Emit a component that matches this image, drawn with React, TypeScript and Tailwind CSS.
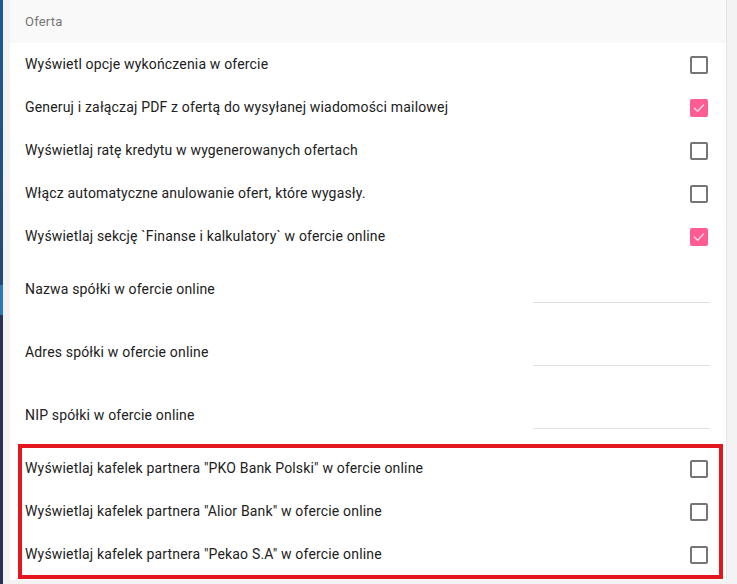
import React from "react";

type CheckRow = { label: string; checked: boolean };

const topRows: CheckRow[] = [
  { label: "Wyświetl opcje wykończenia w ofercie", checked: false },
  { label: "Generuj i załączaj PDF z ofertą do wysyłanej wiadomości mailowej", checked: true },
  { label: "Wyświetlaj ratę kredytu w wygenerowanych ofertach", checked: false },
  { label: "Włącz automatyczne anulowanie ofert, które wygasły.", checked: false },
  { label: "Wyświetlaj sekcję `Finanse i kalkulatory` w ofercie online", checked: true },
];

const inputRows = [
  "Nazwa spółki w ofercie online",
  "Adres spółki w ofercie online",
  "NIP spółki w ofercie online",
];

const partnerRows: CheckRow[] = [
  { label: 'Wyświetlaj kafelek partnera "PKO Bank Polski" w ofercie online', checked: false },
  { label: 'Wyświetlaj kafelek partnera "Alior Bank" w ofercie online', checked: false },
  { label: 'Wyświetlaj kafelek partnera "Pekao S.A" w ofercie online', checked: false },
];

function Checkbox({ checked }: { checked: boolean }) {
  if (checked) {
    return (
      <div className="w-[18px] h-[18px] rounded-[2px] bg-[#ff5c93] flex items-center justify-center">
        <svg width="14" height="14" viewBox="0 0 14 14" fill="none">
          <path d="M2.5 7.2 L5.6 10.2 L11.5 4" stroke="#ffd0e0" strokeWidth="1.6" strokeLinecap="round" strokeLinejoin="round" />
        </svg>
      </div>
    );
  }
  return <div className="w-[18px] h-[18px] rounded-[2px] border-2 border-[#757575] bg-white" />;
}

function Row({ row }: { row: CheckRow }) {
  return (
    <div className="h-[43px] flex items-center justify-between pl-[15px] pr-[18px]">
      <span className="text-[14px] tracking-[0.17px] text-[#212121]">{row.label}</span>
      <Checkbox checked={row.checked} />
    </div>
  );
}

export default function App() {
  return (
    <div
      className="w-[737px] h-[584px] bg-[#f3f3f3] flex overflow-hidden"
      style={{ fontFamily: "Roboto, 'Liberation Sans', sans-serif" }}
    >
      {/* sidebar edge */}
      <div className="w-[3px] h-full flex flex-col">
        <div className="h-[285px] bg-gradient-to-b from-[#1a5c96] to-[#24487a]" />
        <div className="h-[30px] bg-[#2e78b6]" />
        <div className="flex-1 bg-[#283358]" />
      </div>

      <div className="ml-[7px] w-[717px] h-full relative">
        <div className="bg-white border-r border-[#e3e3e3] pb-[4px]">
          <div className="h-[43px] bg-[#f9f9f9] flex items-center pl-[15px]">
            <span className="text-[13px] tracking-[0.2px] text-[#757575]">Oferta</span>
          </div>

          {topRows.map((r) => (
            <Row key={r.label} row={r} />
          ))}

          {inputRows.map((label) => (
            <div key={label} className="h-[63px] flex items-start justify-between pl-[15px] pr-[16px]">
              <span className="text-[14px] tracking-[0.17px] text-[#212121] mt-[21px]">{label}</span>
              <div className="w-[177px] h-[45px] border-b border-[#e0e0e0]" />
            </div>
          ))}

          {partnerRows.map((r) => (
            <Row key={r.label} row={r} />
          ))}
        </div>

        {/* highlight frame around partner tiles */}
        <div className="absolute left-[8px] top-[444px] w-[705px] h-[135px] border-4 border-[#e3171d] pointer-events-none" />
      </div>
    </div>
  );
}
